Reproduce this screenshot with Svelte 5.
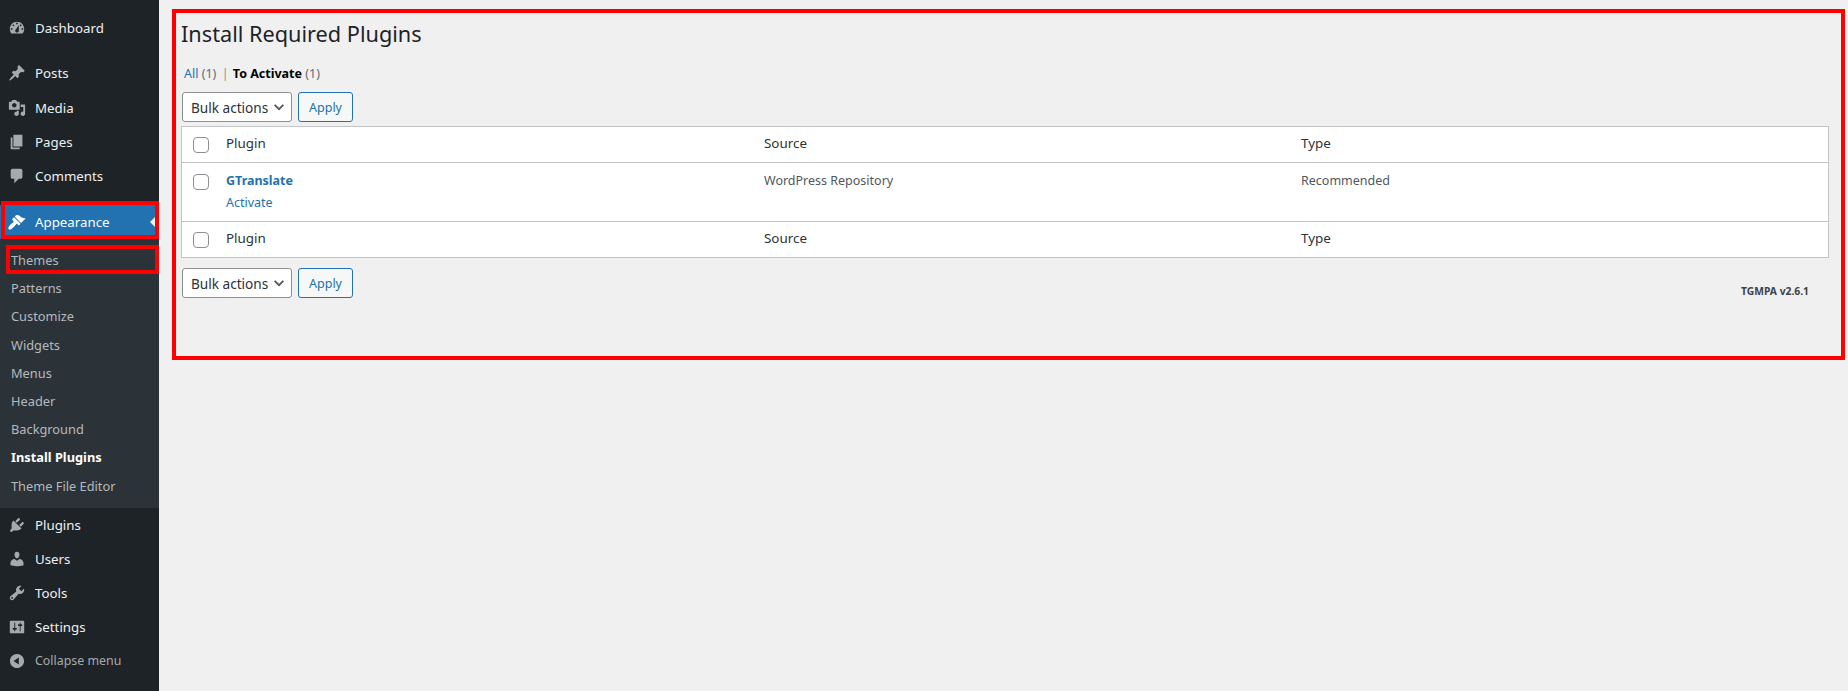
<script>
  const topItems = [
    { label: "Dashboard", icon: "M3.76 16h12.48c1.1-1.37 1.76-3.11 1.76-5 0-4.42-3.58-8-8-8s-8 3.58-8 8c0 1.89.66 3.63 1.76 5zM10 4c.55 0 1 .45 1 1s-.45 1-1 1-1-.45-1-1 .45-1 1-1zM6 6c.55 0 1 .45 1 1s-.45 1-1 1-1-.45-1-1 .45-1 1-1zm8 0c.55 0 1 .45 1 1s-.45 1-1 1-1-.45-1-1 .45-1 1-1zm-5.37 5.55L12 7v6c0 1.1-.9 2-2 2s-2-.9-2-2c0-.57.24-1.08.63-1.45zM4 10c.55 0 1 .45 1 1s-.45 1-1 1-1-.45-1-1 .45-1 1-1zm12 0c.55 0 1 .45 1 1s-.45 1-1 1-1-.45-1-1 .45-1 1-1z", gap: true },
    { label: "Posts", icon: "M10.44 3.02l1.82-1.82 6.36 6.35-1.83 1.82c-1.05-.68-2.48-.57-3.41.36l-.75.75c-.92.93-1.04 2.35-.35 3.41l-1.83 1.82-2.41-2.41-2.8 2.79c-.42.42-3.38 2.71-3.8 2.29s1.86-3.39 2.28-3.81l2.79-2.79L4.1 9.36l1.83-1.82c1.05.69 2.48.57 3.4-.36l.75-.75c.93-.92 1.05-2.35.36-3.41z" },
    { label: "Media", icon: "M13 11V4c0-.55-.45-1-1-1h-1.67L9 1H5L3.67 3H2c-.55 0-1 .45-1 1v7c0 .55.45 1 1 1h10c.55 0 1-.45 1-1zM7 4.5c1.38 0 2.5 1.12 2.5 2.5S8.38 9.5 7 9.5 4.5 8.38 4.5 7 5.62 4.5 7 4.5zM14 6h5v10.5c0 1.38-1.12 2.5-2.5 2.5S14 17.88 14 16.5s1.12-2.5 2.5-2.5c.17 0 .34.02.5.05V9h-3V6zm-4 8.05V13h2v3.5c0 1.38-1.12 2.5-2.5 2.5S7 17.88 7 16.5 8.12 14 9.5 14c.17 0 .34.02.5.05z" },
    { label: "Pages", icon: "M6 15V2h10v13H6zm-1 1h8v2H3V5h2v11z" },
    { label: "Comments", icon: "M5 2h9c1.1 0 2 .9 2 2v7c0 1.1-.9 2-2 2h-2l-5 5v-5H5c-1.1 0-2-.9-2-2V4c0-1.1.9-2 2-2z", gap: true }
  ];

  const appearanceIcon = "M14.48 11.06L7.41 3.99l1.5-1.5c.5-.56 2.3-.47 3.51.32 1.21.8 1.43 1.28 2.91 2.1 1.18.64 2.45 1.26 4.45.85zm-.71.71L6.7 4.7 4.93 6.47c-.39.39-.39 1.02 0 1.41l1.06 1.06c.39.39.39 1.03 0 1.42-.6.6-1.43 1.11-2.21 1.69-.35.26-.7.53-1.01.84-1.34 1.34-2.37 2.92-2.37 3.94 0 .3.07.58.22.82.1.16.22.3.36.41.15.13.33.22.52.28.18.05.37.08.57.08.18 0 .36-.03.54-.08 1.05-.29 2.5-1.4 3.86-2.75.31-.31.59-.66.85-1.01.58-.78 1.09-1.61 1.69-2.21.39-.39 1.03-.39 1.42 0l1.06 1.06c.39.39 1.02.39 1.41 0z";

  const subItems = ["Themes", "Patterns", "Customize", "Widgets", "Menus", "Header", "Background", "Install Plugins", "Theme File Editor"];

  const lowerItems = [
    { label: "Plugins", icon: "M13.11 4.36L9.87 7.6 8 5.73l3.24-3.24c.35-.34 1.05-.2 1.56.32.52.51.66 1.21.31 1.55zm-8 1.77l.91-1.12 9.01 9.01-1.19.84c-.71.71-2.63 1.16-3.82 1.16H6.14L4.9 17.26c-.59.59-1.54.59-2.12 0-.59-.58-.59-1.53 0-2.12l1.24-1.24v-3.88c0-1.13.4-3.19 1.09-3.89zm7.26 3.97l3.24-3.24c.34-.35 1.04-.21 1.55.31.52.51.66 1.21.31 1.55l-3.24 3.25z" },
    { label: "Users", icon: "M10 9.25c-2.27 0-2.73-3.44-2.73-3.44C7 4.02 7.82 2 9.97 2c2.16 0 2.98 2.02 2.71 3.81 0 0-.41 3.44-2.68 3.44zm0 2.57L12.72 10c2.39 0 4.52 2.33 4.52 4.53v2.49s-3.65 1.13-7.24 1.13c-3.65 0-7.24-1.13-7.24-1.13v-2.49c0-2.25 1.94-4.48 4.47-4.48z" },
    { label: "Tools", icon: "M16.68 9.77c-1.34 1.34-3.3 1.67-4.95.99l-5.41 6.52c-.99.99-2.59.99-3.58 0s-.99-2.59 0-3.57l6.52-5.42c-.68-1.65-.35-3.61.99-4.95 1.28-1.28 3.12-1.62 4.72-1.06l-2.89 2.89 2.82 2.82 2.86-2.87c.53 1.58.18 3.39-1.08 4.65zM3.81 16.21c.4.39 1.04.39 1.43 0 .4-.4.4-1.04 0-1.43-.39-.4-1.03-.4-1.43 0-.39.39-.39 1.03 0 1.43z" },
    { label: "Settings", icon: "M18 16V4c0-.55-.45-1-1-1H3c-.55 0-1 .45-1 1v12c0 .55.45 1 1 1h14c.55 0 1-.45 1-1zM8 11h1c.55 0 1 .45 1 1s-.45 1-1 1H8v1.5c0 .28-.22.5-.5.5s-.5-.22-.5-.5V13H6c-.55 0-1-.45-1-1s.45-1 1-1h1V5.5c0-.28.22-.5.5-.5s.5.22.5.5V11zm5-2h-1c-.55 0-1-.45-1-1s.45-1 1-1h1V5.5c0-.28.22-.5.5-.5s.5.22.5.5V7h1c.55 0 1 .45 1 1s-.45 1-1 1h-1v5.5c0 .28-.22.5-.5.5s-.5-.22-.5-.5V9z" }
  ];

  const collapseIcon = "M10 2.16c4.33 0 7.84 3.51 7.84 7.84s-3.51 7.84-7.84 7.84S2.16 14.33 2.16 10 5.71 2.16 10 2.16zm2 11.72V6.12L6.18 9.97z";
</script>

{#snippet menuRow(item, upper)}
  <li class="item" class:upper class:gap={item.gap}>
    <svg viewBox="0 0 20 20"><path d={item.icon} /></svg>
    <span>{item.label}</span>
  </li>
{/snippet}

{#snippet bulk()}
  <div class="actions">
    <div class="select">
      <span>Bulk actions</span>
      <svg viewBox="0 0 16 16"><path d="M3 5.5l5 5 5-5" /></svg>
    </div>
    <button type="button" class="apply">Apply</button>
  </div>
{/snippet}

<div class="shell">
  <aside class="sidebar">
    <ul class="menu">
      {#each topItems as item}
        {@render menuRow(item, true)}
      {/each}

      <li class="item upper current">
        <svg viewBox="0 0 20 20"><path d={appearanceIcon} /></svg>
        <span>Appearance</span>
        <i class="arrow"></i>
        <b class="mark"></b>
      </li>
      <li>
        <ul class="submenu">
          {#each subItems as sub, i}
            <li class:active={sub === "Install Plugins"}>
              {sub}
              {#if i === 0}<b class="mark"></b>{/if}
            </li>
          {/each}
        </ul>
      </li>

      {#each lowerItems as item}
        {@render menuRow(item, false)}
      {/each}

      <li class="item collapse">
        <svg viewBox="0 0 20 20"><path d={collapseIcon} /></svg>
        <span>Collapse menu</span>
      </li>
    </ul>
  </aside>

  <main class="content">
    <section class="wrap">
      <h1>Install Required Plugins</h1>
      <div class="views">
        <a href="#all">All</a> <span class="count">(1)</span>
        <span class="sep">|</span>
        <strong>To Activate</strong> <span class="count">(1)</span>
      </div>

      {@render bulk()}

      <table>
        <thead>
          <tr>
            <td class="check"><span class="box"></span></td>
            <th class="col-plugin">Plugin</th>
            <th class="col-source">Source</th>
            <th>Type</th>
          </tr>
        </thead>
        <tbody>
          <tr>
            <td class="check"><span class="box"></span></td>
            <td>
              <a class="name" href="#gtranslate">GTranslate</a>
              <a class="row-action" href="#activate">Activate</a>
            </td>
            <td>WordPress Repository</td>
            <td>Recommended</td>
          </tr>
        </tbody>
        <tfoot>
          <tr>
            <td class="check"><span class="box"></span></td>
            <th>Plugin</th>
            <th>Source</th>
            <th>Type</th>
          </tr>
        </tfoot>
      </table>

      <div class="bottom">
        {@render bulk()}
        <strong class="version">TGMPA v2.6.1</strong>
      </div>
      <b class="mark"></b>
    </section>
  </main>
</div>

<style>
  :global(body) {
    background: #f0f0f1;
    font-family: "Noto Sans", "Open Sans", sans-serif;
    font-size: 12.5px;
    color: #50575e;
  }

  ul {
    list-style: none;
    margin: 0;
    padding: 0;
  }

  a {
    color: #2271b1;
    text-decoration: none;
  }

  .shell {
    display: flex;
    height: 691px;
    overflow: hidden;
  }

  /* sidebar */
  .sidebar {
    width: 159px;
    flex: none;
    background: #1d2327;
  }

  .menu {
    padding-top: 11px;
  }

  .item {
    position: relative;
    display: flex;
    align-items: center;
    height: 34px;
    padding-left: 8px;
    font-size: 13.3px;
    color: #f0f0f1;
  }

  .item.upper {
    height: 34.33px;
  }

  .item.gap {
    margin-bottom: 11px;
  }

  .item svg {
    width: 18px;
    height: 18px;
    margin-right: 9px;
    fill: #a7aaad;
    flex: none;
  }

  .item.current {
    background: #2271b1;
    color: #fff;
  }

  .item.current svg {
    fill: #fff;
  }

  .arrow {
    position: absolute;
    right: 4px;
    top: 12px;
    border: 5px solid transparent;
    border-right-color: #f0f0f1;
    border-left-width: 0;
  }

  .submenu {
    background: #2c3338;
    padding: 7px 0 8px;
  }

  .submenu li {
    position: relative;
    padding: 5px 12px 5px 11px;
    font-size: 12.8px;
    line-height: 18.2px;
    color: #b4b9be;
  }

  .submenu li.active {
    color: #fff;
    font-weight: 700;
  }

  .item.collapse {
    color: #a7aaad;
    font-size: 12.4px;
  }

  /* annotation boxes drawn over the screenshot */
  .mark {
    position: absolute;
    border: 4px solid #f00;
    pointer-events: none;
  }

  .item .mark {
    inset: -4px 0 0 1px;
  }

  .submenu .mark {
    inset: -1px 0 0 6px;
  }

  /* content */
  .content {
    flex: 1;
    min-width: 0;
  }

  .wrap {
    position: relative;
    padding: 21px 19px 0 22px;
  }

  .wrap > .mark {
    left: 13px;
    top: 9px;
    right: 3px;
    height: 343px;
  }

  h1 {
    margin: 0;
    font-size: 21.7px;
    font-weight: 400;
    line-height: 26px;
    color: #1d2327;
  }

  .views {
    margin: 17px 0 0 3px;
    line-height: 20px;
    color: #646970;
  }

  .views strong {
    color: #000;
  }

  .sep {
    margin: 0 1px 0 2px;
    color: #a08f86;
  }

  .actions {
    display: flex;
    gap: 6px;
    margin-left: 1px;
  }

  .views + .actions {
    margin-top: 8px;
    margin-bottom: 4px;
  }

  .select {
    display: flex;
    align-items: center;
    justify-content: space-between;
    width: 110px;
    height: 30px;
    padding: 0 5px 0 8px;
    box-sizing: border-box;
    background: #fff;
    border: 1px solid #8c8f94;
    border-radius: 3px;
    font-size: 13.6px;
    white-space: nowrap;
    color: #2c3338;
  }

  .select svg {
    width: 14px;
    height: 14px;
    fill: none;
    stroke: #50575e;
    stroke-width: 2;
  }

  .apply {
    width: 55px;
    height: 30px;
    padding: 0;
    background: #f6f7f7;
    border: 1px solid #2271b1;
    border-radius: 3px;
    font: inherit;
    color: #2271b1;
  }

  table {
    width: 100%;
    table-layout: fixed;
    border-collapse: collapse;
    background: #fff;
    border: 1px solid #c3c4c7;
  }

  th,
  td {
    padding: 8px 10px;
    text-align: left;
    vertical-align: top;
    font-size: 12.5px;
    font-weight: 400;
    line-height: 19.5px;
  }

  th {
    font-size: 13.4px;
    color: #2c3338;
  }

  thead th {
    padding-top: 7px;
  }

  thead tr {
    border-bottom: 1px solid #c3c4c7;
  }

  tbody td {
    padding-bottom: 8px;
  }

  tfoot tr {
    border-top: 1px solid #c3c4c7;
  }

  tfoot th {
    padding-top: 7px;
    padding-bottom: 9px;
  }

  .check {
    width: 23px;
    padding: 10px 0 0 11px;
    box-sizing: content-box;
    line-height: 0;
  }

  tbody .check {
    padding-top: 11px;
  }

  .col-plugin {
    width: 518px;
  }

  .col-source {
    width: 517px;
  }

  .box {
    display: inline-block;
    box-sizing: border-box;
    width: 16px;
    height: 16px;
    background: #fff;
    border: 1px solid #8c8f94;
    border-radius: 4px;
  }

  .name {
    display: block;
    font-weight: 700;
    color: #2271b1;
  }

  .row-action {
    display: block;
    margin-top: 3px;
  }

  .bottom {
    display: flex;
    justify-content: space-between;
    margin-top: 10px;
  }

  .version {
    margin: 15px 20px 0 0;
    font-size: 10.3px;
    line-height: 16px;
    color: #3c434a;
  }
</style>
